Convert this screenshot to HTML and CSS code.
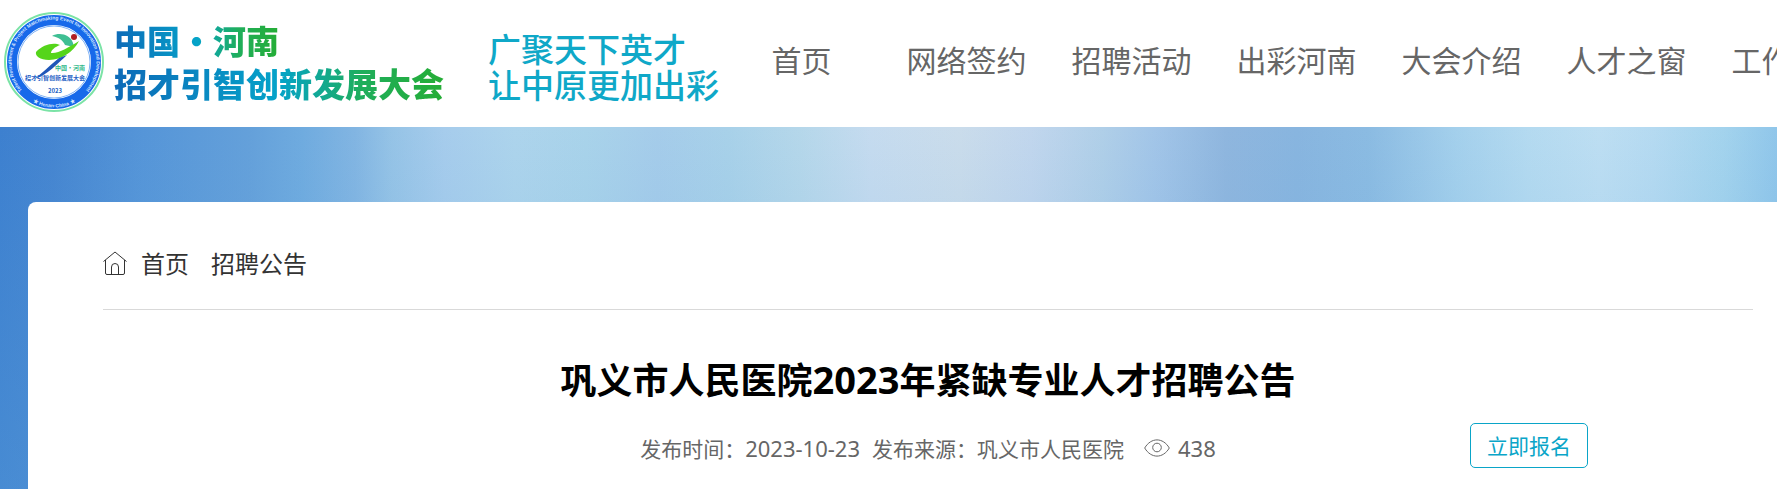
FILE: index.html
```html
<!DOCTYPE html>
<html lang="zh-CN">
  <head>
    <meta charset="UTF-8" />
    <meta name="viewport" content="width=device-width, initial-scale=1.0" />
    <title>巩义市人民医院2023年紧缺专业人才招聘公告</title>
    <link rel="stylesheet" href="styles.css">
  </head>
  <body>
    <header class="header">
      <a href="#" class="logo">
        <svg class="emblem" viewBox="0 0 100 100" aria-hidden="true">
          <defs>
            <path id="ring-top" d="M18.9 79 A42.5 42.5 0 1 1 81.1 79" />
            <path id="ring-bottom" d="M21 85 A45.5 45.5 0 0 0 79 85" />
          </defs>
          <circle cx="50" cy="50" r="49" fill="#fff" stroke="#7be3a6" stroke-width="2" />
          <circle cx="50" cy="50" r="42" fill="#fff" stroke="#1769ea" stroke-width="10" />
          <circle cx="50" cy="50" r="36" fill="none" stroke="#7fb2f5" stroke-width="1" />
          <text class="ring-text"><textPath href="#ring-top" startOffset="50%" text-anchor="middle">Talent Recruitment &amp; Project Matchmaking Event for Innovation and Development</textPath></text>
          <text class="ring-text" text-anchor="middle"><textPath href="#ring-bottom" startOffset="50%">★ Henan·China ★</textPath></text>
          <path d="M48 24 C55 20 66 22 69 31 L70 35 L61 33 C59 28 54 25 48 24 Z" fill="#3fbf93" />
          <path d="M32 40 C39 32 50 30 56 33 C51 35 47 38 47 41 C54 42 65 35 75 29 C70 39 58 48 45 48 C36 48 31 44 32 40 Z" fill="#55d51b" />
          <path d="M55 46 L63 43 C54 51 44 63 30 67 C39 61 45 54 55 46 Z" fill="#1f56b8" />
          <circle cx="70" cy="25" r="3" fill="#b01f24" />
          <text x="66" y="58" class="mark mark-green" text-anchor="middle">中国·河南</text>
          <text x="51" y="68" class="mark mark-blue" text-anchor="middle">招才引智创新发展大会</text>
          <text x="51" y="81" class="mark mark-blue" text-anchor="middle">2023</text>
        </svg>
        <span class="logo-name">
          <span class="grad">中国<span class="dot">·</span>河南</span>
          <span class="grad">招才引智创新发展大会</span>
        </span>
      </a>
      <div class="slogan">
        <p>广聚天下英才</p>
        <p>让中原更加出彩</p>
      </div>
      <nav class="nav">
        <a href="#">首页</a>
        <a href="#">网络签约</a>
        <a href="#">招聘活动</a>
        <a href="#">出彩河南</a>
        <a href="#">大会介绍</a>
        <a href="#">人才之窗</a>
        <a href="#">工作动态</a>
      </nav>
    </header>

    <main class="main">
      <div class="card">
        <div class="crumbs">
          <svg class="home" viewBox="0 0 24 24" aria-hidden="true">
            <path d="M0.5 10.5 L12 1 L23.5 10.5 M2.5 9 V22 Q2.5 23.5 4 23.5 H20 Q21.5 23.5 21.5 22 V9 M8.5 23.5 V16 A3.5 3.5 0 0 1 15.5 16 V23.5" />
          </svg>
          <a href="#">首页</a>
          <a href="#">招聘公告</a>
        </div>

        <h1>巩义市人民医院<span class="year">2023</span>年紧缺专业人才招聘公告</h1>

        <div class="info">
          <div class="meta">
            <span>发布时间：<span class="num">2023-10-23</span></span>
            <span>发布来源：巩义市人民医院</span>
            <span class="views">
              <svg class="eye" viewBox="0 0 26 18" aria-hidden="true">
                <path d="M0.7 9 C7 -1.8 19 -1.8 25.3 9 C19 19.8 7 19.8 0.7 9 Z" />
                <circle cx="13" cy="8.5" r="4.3" />
              </svg>
              <span class="num">438</span>
            </span>
          </div>
          <button class="btn" type="button">立即报名</button>
        </div>
      </div>
    </main>
  </body>
</html>
```

FILE: styles.css
```css
* {
  padding: 0;
  margin: 0;
  box-sizing: border-box;
}

body {
  min-height: 100vh;
  display: flex;
  flex-direction: column;
  overflow: hidden;
  font-family: "Noto Sans CJK SC", sans-serif;
  background-color: #fff;
}

a {
  color: inherit;
  text-decoration: none;
}

.header {
  display: flex;
  align-items: center;
  height: 127px;
  padding: 0 0 4px 4px;
  background-color: #fff;
}

.logo {
  display: flex;
  align-items: center;
  flex-shrink: 0;
  gap: 10px;
}

.emblem {
  width: 100px;
  height: 100px;
}

.ring-text {
  font-family: "Liberation Sans", sans-serif;
  font-size: 5px;
  font-weight: bold;
  fill: #d5e5ff;
}

.mark {
  font-size: 6px;
  font-weight: bold;
}

.mark-green {
  fill: #2fb98a;
}

.mark-blue {
  fill: #1f5fc4;
}

.logo-name {
  display: flex;
  flex-direction: column;
  align-items: flex-start;
  font-size: 33px;
  font-weight: 900;
  line-height: 43px;
}

.grad {
  color: transparent;
  background: linear-gradient(90deg, #0d6ab8, #05a3c9 50%, #1fae5c 75%, #25ad35);
  -webkit-background-clip: text;
  background-clip: text;
}

.dot {
  display: inline-block;
  width: 33px;
  text-align: center;
}

.slogan {
  flex-shrink: 0;
  margin-left: 44px;
  padding-top: 8px;
  font-size: 33px;
  font-weight: 500;
  line-height: 36px;
  color: #0fa8c8;
}

.nav {
  display: flex;
  flex: 1;
  min-width: 0;
  padding-bottom: 6px;
  overflow: hidden;
}

.nav a {
  flex: 0 0 165px;
  font-size: 30px;
  line-height: 44px;
  text-align: center;
  white-space: nowrap;
  color: #666;
}

.main {
  flex: 1;
  display: flex;
  padding: 75px 0 0 28px;
  background: linear-gradient(rgba(95, 165, 220, 0), rgba(95, 165, 220, 0.3)),
    linear-gradient(90deg, #3d80cf 0%, #4585d0 3%, #5595d8 8%, #64a0da 14%,
      #6fabdf 17%, #82b5e2 20%, #95c3e6 22%, #a6ccec 25%, #add4ec 29%,
      #a9d3ea 33%, #a5ccea 37%, #a8d1e9 41%, #b5d7ea 45%, #c5dbef 49%,
      #cadceb 54%, #c1d6ed 58%, #b0cfe8 62%, #a2c5e8 65%, #8fb6de 69%,
      #88b5df 73%, #8bbbe2 77%, #a4d0ec 82%, #b4daf0 86%, #bddef2 90%,
      #b5daf1 93%, #a3d3ed 97%, #90c6ea 100%);
}

.card {
  flex: 1;
  padding: 0 24px 0 75px;
  border-radius: 8px 0 0 0;
  background-color: #fff;
}

.crumbs {
  display: flex;
  align-items: center;
  height: 108px;
  padding-top: 14px;
  border-bottom: 1px solid #d9d9d9;
  font-size: 24px;
  color: #333;
}

.crumbs a {
  margin-right: 22px;
}

.home {
  width: 24px;
  height: 24px;
  margin-right: 14px;
  fill: none;
  stroke: #333;
}

h1 {
  margin-top: 41px;
  font-size: 36px;
  line-height: 54px;
  text-align: center;
  color: #000;
}

.year {
  font-family: "Noto Sans", sans-serif;
  font-size: 38px;
}

.info {
  display: grid;
  grid-template-columns: 1fr auto 1fr;
  align-items: center;
  margin-top: 17px;
}

.meta {
  grid-column: 2;
  display: flex;
  align-items: center;
  gap: 12px;
  padding-top: 4px;
  font-size: 21px;
  line-height: 32px;
  color: #666;
}

.num {
  font-family: "Noto Sans", sans-serif;
  font-size: 22px;
}

.views {
  display: flex;
  align-items: center;
  gap: 8px;
  margin-left: 8px;
}

.eye {
  width: 26px;
  height: 18px;
  fill: none;
  stroke: #666;
}

.btn {
  justify-self: end;
  height: 45px;
  margin-right: 165px;
  padding: 0 16px 2px;
  border: 1px solid #0aa5c8;
  border-radius: 5px;
  background-color: #fff;
  font-family: inherit;
  font-size: 21px;
  color: #0aa5c8;
  cursor: pointer;
}
```
